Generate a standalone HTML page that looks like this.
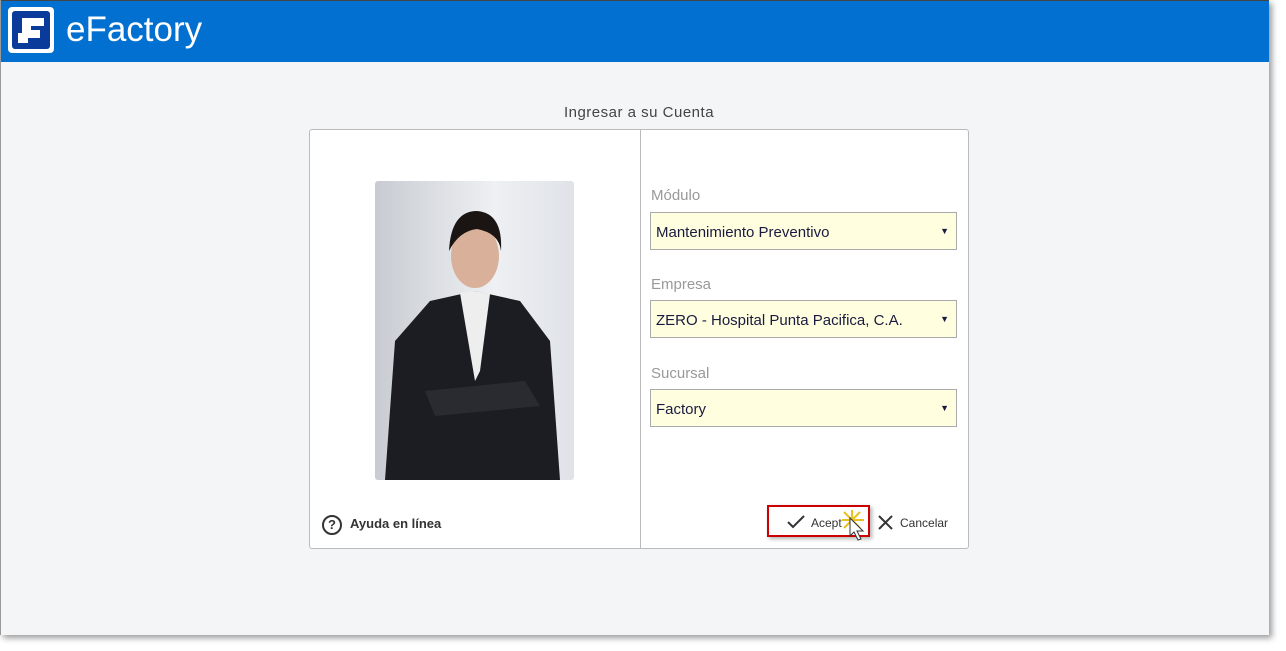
<!DOCTYPE html>
<html><head><meta charset="utf-8"><style>
body{margin:0;width:1286px;height:651px;background:#fff;position:relative;overflow:hidden;font-family:"Liberation Sans","DejaVu Sans",sans-serif}
.page{position:absolute;left:0;top:0;width:1268px;height:635px;background:#f4f5f7;border-left:1px solid #999;box-shadow:3px 3px 6px rgba(0,0,0,.4)}
.hdr{position:absolute;left:0;top:0;width:100%;height:61px;background:#0270d0;border-top:1px solid #444}
.logo{position:absolute;left:7px;top:6px;width:46px;height:46px;background:#fff;border-radius:4px}
.logo div{position:absolute;left:4px;top:4px;width:38px;height:38px;background:#0a3a9a;border-radius:3px}
.title{position:absolute;left:65px;top:9px;color:#fff;font-size:35px}
.cap{position:absolute;left:0;width:1276px;top:104px;text-align:center;color:#444;font-size:15px;letter-spacing:.5px}
.box{position:absolute;left:308px;top:129px;width:658px;height:418px;background:#fff;border:1px solid #bbb;border-radius:3px}
.div{position:absolute;left:330px;top:0;width:1px;height:418px;background:#bbb}
.photo{position:absolute;left:65px;top:51px;width:199px;height:299px;border-radius:3px;background:linear-gradient(90deg,#c8ccd2,#eef0f3 60%,#dfe3e8);overflow:hidden}
.lbl{position:absolute;left:341px;color:#999;font-size:15px}
.sel{position:absolute;left:340px;width:307px;height:38px;background:#ffffe0;border:1px solid #aaa;box-sizing:border-box;font-size:15px;color:#1a1a40;padding:11px 5px}
.sel:after{content:"▼";position:absolute;right:7px;top:13px;font-size:9px}
</style></head><body>
<div class="page">
<div class="hdr"><div class="logo"><div><svg width="38" height="38"><path d="M10 7h22v8H19v4h9v8H16v5H6V22h4z" fill="#fff"/></svg></div></div><div class="title">eFactory</div></div>
<div class="cap">Ingresar a su Cuenta</div>
<div class="box">
<div class="photo"><svg width="199" height="299"><path d="M10 299 L20 160 L55 120 L100 110 L145 120 L175 160 L185 299Z" fill="#1c1d22"/><path d="M85 112 L100 110 L115 113 L105 190 L100 200 Z" fill="#eee"/><ellipse cx="100" cy="75" rx="24" ry="32" fill="#d9b09a"/><path d="M74 70 Q76 30 102 30 Q128 32 126 70 Q124 52 102 48 Q84 50 74 70Z" fill="#1a1412"/><path d="M50 210 L150 200 L165 225 L60 235Z" fill="#2a2b30"/></svg></div>
<div style="position:absolute;left:12px;top:385px;width:16px;height:16px;border:2px solid #333;border-radius:50%;text-align:center;font-size:13px;font-weight:bold;line-height:16px;color:#333">?</div>
<div style="position:absolute;left:40px;top:386px;font-size:13px;font-weight:bold;color:#333">Ayuda en línea</div>
<div class="div"></div>
<div class="lbl" style="top:57px">Módulo</div>
<div class="sel" style="top:82px">Mantenimiento Preventivo</div>
<div class="lbl" style="top:146px">Empresa</div>
<div class="sel" style="top:170px">ZERO - Hospital Punta Pacifica, C.A.</div>
<div class="lbl" style="top:235px">Sucursal</div>
<div class="sel" style="top:259px">Factory</div>
<div style="position:absolute;left:457px;top:375px;width:99px;height:28px;border:2px solid #c00;box-shadow:2px 2px 4px rgba(0,0,0,.3)"></div>
<svg style="position:absolute;left:477px;top:385px" width="18" height="14"><path d="M1 7l5 5L17 1" stroke="#333" stroke-width="2" fill="none"/></svg>
<div style="position:absolute;left:501px;top:386px;font-size:12px;color:#333">Acept</div>
<svg style="position:absolute;left:530px;top:378px" width="30" height="40"><path d="M12 2v22M2 12h22M4 4l16 16M20 4L4 20" stroke="#e8c020" stroke-width="2"/><path d="M10 10v18l4-4 4 8 3-1-4-8h6z" fill="#fff" stroke="#333"/></svg>
<svg style="position:absolute;left:568px;top:385px" width="15" height="15"><path d="M1 1l13 13M14 1L1 14" stroke="#333" stroke-width="2"/></svg>
<div style="position:absolute;left:590px;top:386px;font-size:12px;color:#333">Cancelar</div>
</div>
</div>
</body></html>
